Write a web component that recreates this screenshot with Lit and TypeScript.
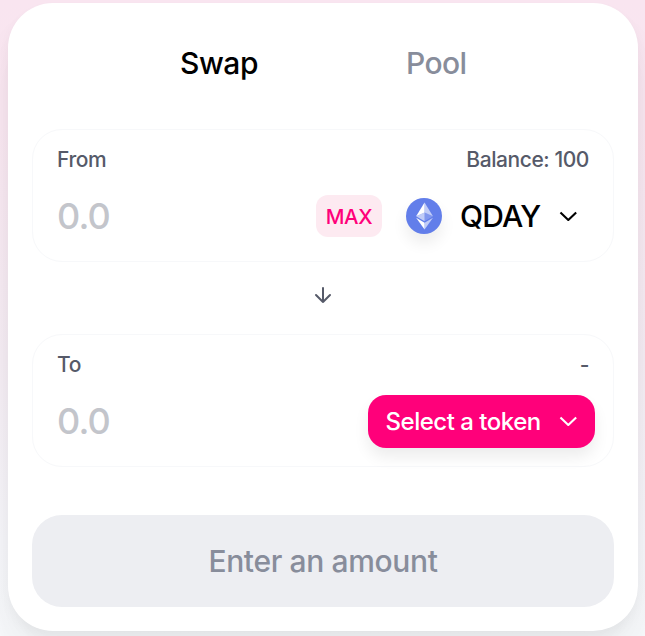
import { LitElement, html, css, svg } from "lit";
import { customElement, property } from "lit/decorators.js";

const chevron = html`<svg class="chevron" width="18" height="10.5" viewBox="0 0 12 7" fill="none">
  <path d="M0.97168 1L6.20532 6L11.439 1" stroke="currentColor" stroke-width="1.4"></path>
</svg>`;

const ethFacets = svg`
  <path fill-opacity=".602" d="M16.498 4v8.87l7.497 3.35z"></path>
  <path d="M16.498 4L9 16.22l7.498-3.35z"></path>
  <path fill-opacity=".602" d="M16.498 21.968v6.027L24 17.616z"></path>
  <path d="M16.498 27.995v-6.028L9 17.616z"></path>
  <path fill-opacity=".2" d="M16.498 20.573l7.497-4.353-7.497-3.348z"></path>
  <path fill-opacity=".602" d="M9 16.22l7.498 4.353v-7.701z"></path>`;

@customElement("currency-panel")
class CurrencyPanel extends LitElement {
  @property() label = "";
  @property() balance = "";
  @property() token = "";

  static styles = css`
    :host {
      display: block;
      box-sizing: border-box;
      height: 133px;
      border: 1px solid #f7f8fa;
      border-radius: 30px;
      background: #fff;
    }
    .labels {
      display: flex;
      justify-content: space-between;
      padding: 16px 24px 0;
      font-size: 21px;
      line-height: 27px;
      color: #565a69;
    }
    .entry {
      display: flex;
      align-items: center;
      height: 54px;
      margin-top: 16px;
      padding: 0 18px 0 24px;
    }
    .amount {
      flex: 1;
      font-size: 36px;
      line-height: 54px;
      letter-spacing: -0.8px;
      color: #c3c5cb;
    }
    .max {
      box-sizing: border-box;
      width: 66px;
      height: 42px;
      margin-right: 24px;
      border-radius: 12px;
      background: #fdeaf1;
      color: #ff007a;
      font-size: 20.5px;
      line-height: 44px;
      text-align: center;
    }
    .token {
      display: flex;
      align-items: center;
      color: #000;
      font-size: 30px;
      padding-right: 18px;
    }
    .name {
      width: 80px;
      letter-spacing: -0.8px;
      white-space: nowrap;
    }
    .eth {
      width: 36px;
      height: 36px;
      border-radius: 50%;
      background: #627eea;
      box-shadow: 0 9px 15px rgba(0, 0, 0, 0.075);
      margin-right: 18px;
    }
    .token .chevron {
      margin-left: 19px;
    }
    .select {
      display: flex;
      align-items: center;
      justify-content: space-between;
      box-sizing: border-box;
      width: 227px;
      height: 53px;
      padding: 0 18px 0 17.5px;
      border-radius: 18px;
      background: #ff007a;
      color: #fff;
      font-size: 24px;
      box-shadow: 0 9px 15px rgba(0, 0, 0, 0.075);
    }
    .select span {
      letter-spacing: -0.48px;
    }
  `;

  render() {
    return html`
      <div class="labels"><span>${this.label}</span><span>${this.balance}</span></div>
      <div class="entry">
        <span class="amount">0.0</span>
        ${this.token
          ? html`<span class="max">MAX</span>
              <span class="token">
                <svg class="eth" viewBox="0 0 32 32" fill="#fff">${ethFacets}</svg>
                <span class="name">${this.token}</span>${chevron}
              </span>`
          : html`<span class="select"><span>Select a token</span>${chevron}</span>`}
      </div>
    `;
  }
}

@customElement("app-root")
class AppRoot extends LitElement {
  static styles = css`
    :host {
      display: block;
      box-sizing: border-box;
      height: 636px;
      overflow: hidden;
      padding: 3px 7px 0 8px;
      background: linear-gradient(#f9e5f0 0, #f8e6f0 120px, #f4ecf3 360px, #f5f5f9 540px, #f6f8fa 636px);
      font-family: Inter, "Liberation Sans", sans-serif;
      font-weight: 500;
      letter-spacing: -0.432px;
    }
    .card {
      box-sizing: border-box;
      height: 628px;
      padding: 0 24px;
      border-radius: 45px;
      background: #fff;
      box-shadow: 0 0 1.5px rgba(0, 0, 0, 0.01), 0 6px 12px rgba(0, 0, 0, 0.04),
        0 24px 36px rgba(0, 0, 0, 0.04), 0 36px 48px rgba(0, 0, 0, 0.01);
    }
    .tabs {
      display: flex;
      height: 126px;
      font-size: 30px;
      line-height: 36px;
      color: #888d9b;
    }
    .tab {
      padding-top: 42px;
      letter-spacing: -0.6px;
    }
    .tab.active {
      margin-left: 148px;
      width: 226px;
      color: #000;
      letter-spacing: -0.432px;
    }
    .arrow {
      display: flex;
      align-items: center;
      justify-content: center;
      box-sizing: border-box;
      height: 72px;
      padding-bottom: 6px;
      color: #565a69;
    }
    .submit {
      height: 92px;
      margin-top: 48px;
      border-radius: 30px;
      background: #edeef2;
      color: #888d9b;
      font-size: 30px;
      letter-spacing: -0.35px;
      line-height: 92px;
      text-align: center;
    }
  `;

  render() {
    return html`
      <main class="card">
        <nav class="tabs">
          <span class="tab active">Swap</span>
          <span class="tab">Pool</span>
        </nav>
        <currency-panel label="From" balance="Balance: 100" token="QDAY"></currency-panel>
        <div class="arrow">
          <svg width="24" height="24" viewBox="0 0 24 24" fill="none" stroke="currentColor"
            stroke-width="2" stroke-linecap="round" stroke-linejoin="round">
            <path d="M12 5v14M19 12l-7 7-7-7"></path>
          </svg>
        </div>
        <currency-panel label="To" balance="-"></currency-panel>
        <div class="submit">Enter an amount</div>
      </main>
    `;
  }
}
